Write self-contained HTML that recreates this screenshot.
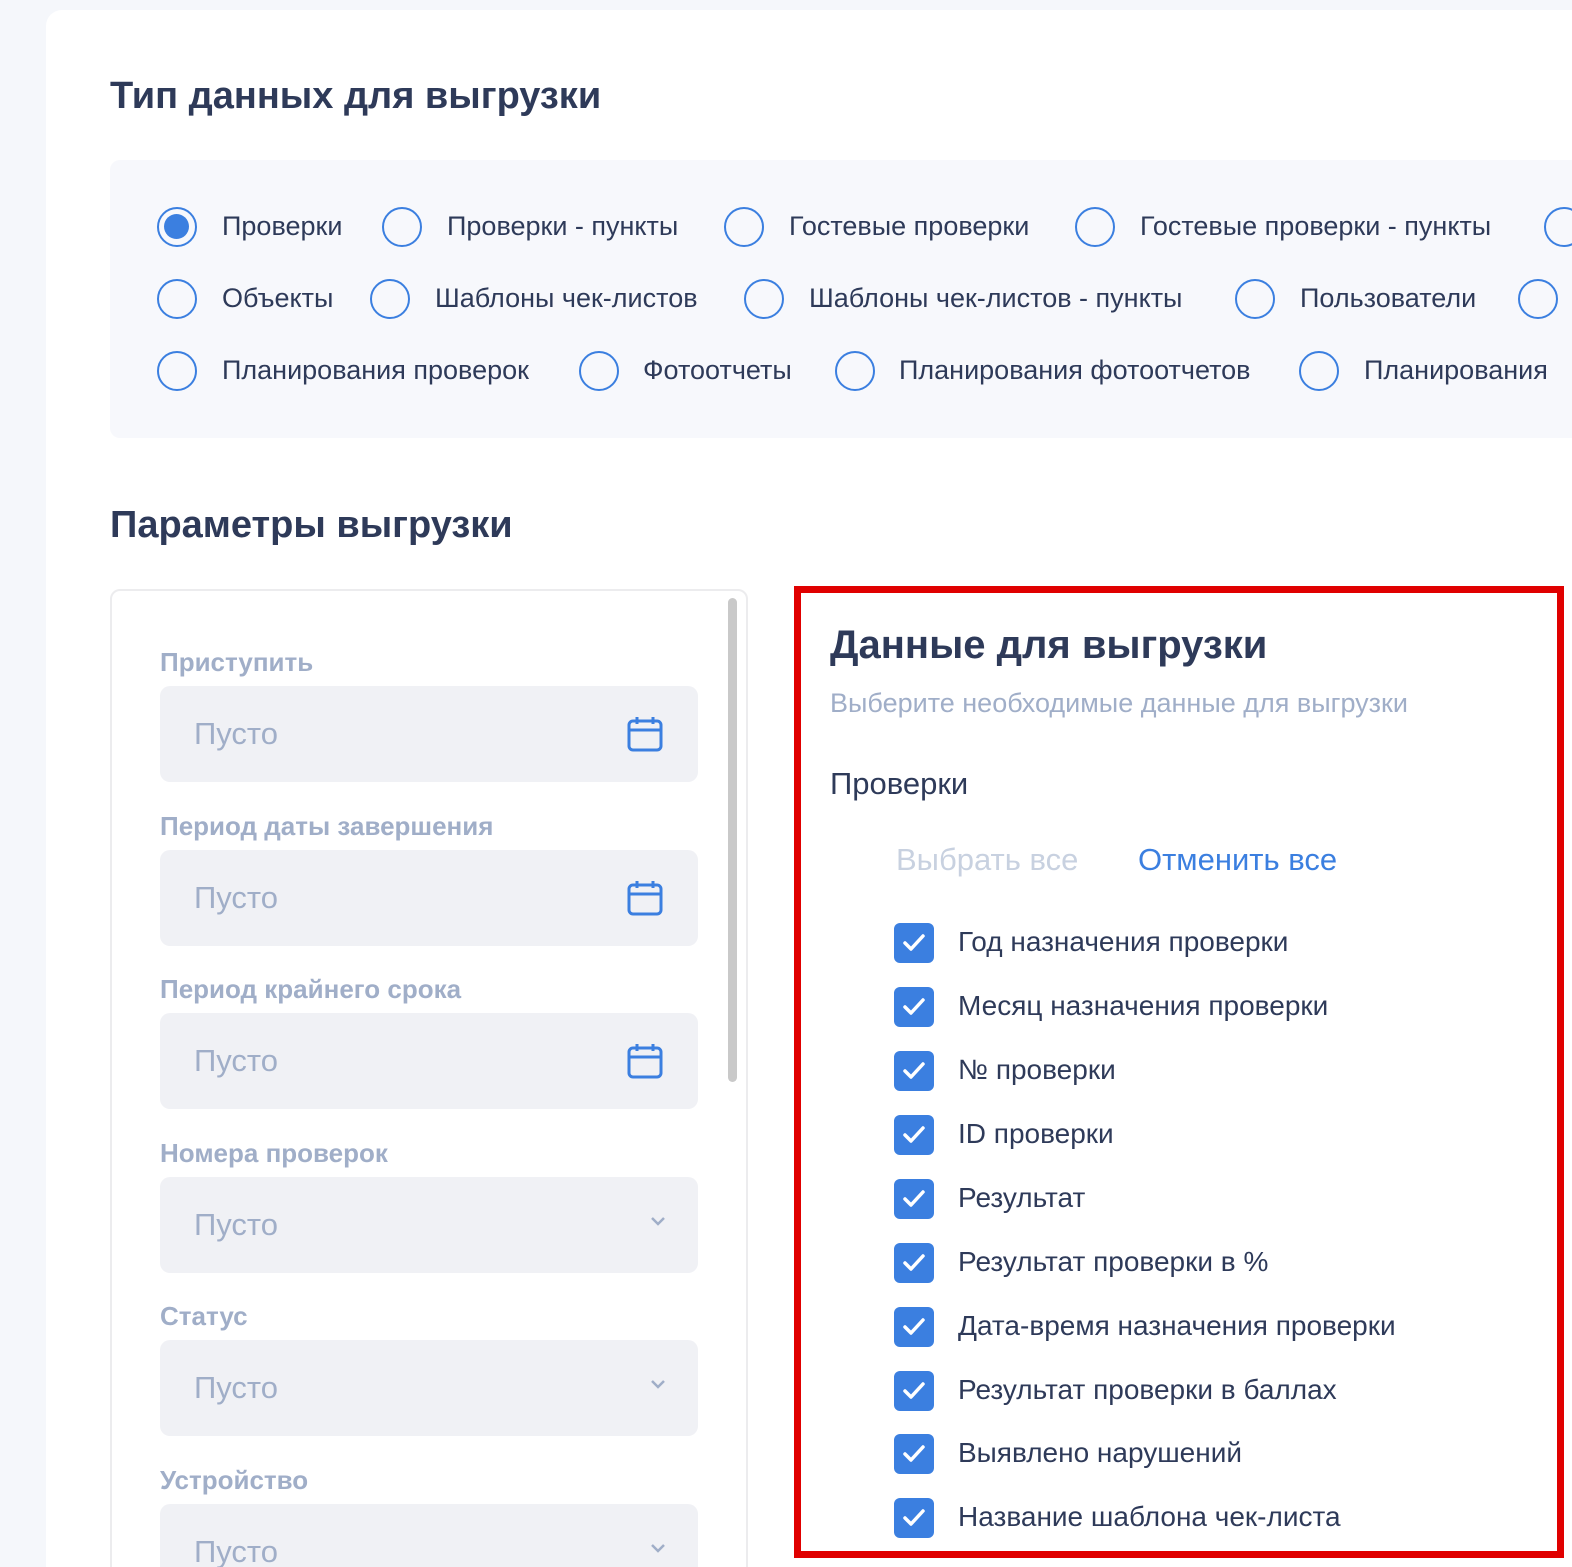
<!DOCTYPE html><html style="overflow:hidden;width:1572px;height:1567px"><head><meta charset="utf-8"><style>
*{box-sizing:border-box;margin:0;padding:0}
html,body{width:1572px;height:1567px;overflow:hidden}
body{background:#f5f7fb;font-family:"Liberation Sans",Arial,sans-serif;color:#2e3a59}
#w{position:relative;width:1572px;height:1567px;overflow:hidden}
.card{position:absolute;left:46px;top:10px;width:1526px;height:1557px;background:#fff;border-radius:16px 0 0 0}
.a{position:absolute;white-space:nowrap}
h1{position:absolute;font-size:38px;font-weight:bold;color:#2e3a59;letter-spacing:0}
.rbox{position:absolute;left:110px;top:160px;width:1462px;height:278px;background:#f7f8fc;border-radius:10px 0 0 10px}
.r{position:absolute;width:40px;height:40px;border:2.5px solid #3b7fe0;border-radius:50%}
.r.on::after{content:"";position:absolute;left:5px;top:5px;width:25px;height:25px;border-radius:50%;background:#3b7fe0}
.rl{position:absolute;font-size:27px;color:#2e3a59;white-space:nowrap}
.panel{position:absolute;left:110px;top:589px;width:638px;height:1000px;border:2px solid #ececee;border-radius:10px;background:#fff}
.lab{position:absolute;left:160px;font-size:26px;font-weight:bold;color:#a0aec8}
.inp{position:absolute;left:160px;width:538px;height:96px;background:#f0f1f5;border-radius:10px}
.inp span{position:absolute;left:34px;top:30px;font-size:31px;color:#a0aec8}
.ic{position:absolute;left:467px;top:30px}
.chev{position:absolute;left:490px;top:38px}
.red{position:absolute;left:794px;top:586px;width:770px;height:972px;border:7px solid #e00000;background:#fff}
.cb{position:absolute;left:894px;width:40px;height:40px;background:#3b7fe0;border-radius:6px}
.cb svg{position:absolute;left:8px;top:9px}
.cl{position:absolute;left:958px;font-size:28px;color:#2e3a59;white-space:nowrap}
</style></head><body><div id="w">
<div class="card"></div>
<h1 style="left:110px;top:75px">Тип данных для выгрузки</h1>
<div class="rbox"></div>
<div class="r on" style="left:157px;top:207px"></div><div class="rl" style="left:222px;top:211px">Проверки</div>
<div class="r" style="left:382px;top:207px"></div><div class="rl" style="left:447px;top:211px">Проверки - пункты</div>
<div class="r" style="left:724px;top:207px"></div><div class="rl" style="left:789px;top:211px">Гостевые проверки</div>
<div class="r" style="left:1075px;top:207px"></div><div class="rl" style="left:1140px;top:211px">Гостевые проверки - пункты</div>
<div class="r" style="left:1544px;top:207px"></div>
<div class="r" style="left:157px;top:279px"></div><div class="rl" style="left:222px;top:283px">Объекты</div>
<div class="r" style="left:370px;top:279px"></div><div class="rl" style="left:435px;top:283px">Шаблоны чек-листов</div>
<div class="r" style="left:744px;top:279px"></div><div class="rl" style="left:809px;top:283px">Шаблоны чек-листов - пункты</div>
<div class="r" style="left:1235px;top:279px"></div><div class="rl" style="left:1300px;top:283px">Пользователи</div>
<div class="r" style="left:1518px;top:279px"></div>
<div class="r" style="left:157px;top:351px"></div><div class="rl" style="left:222px;top:355px">Планирования проверок</div>
<div class="r" style="left:579px;top:351px"></div><div class="rl" style="left:643px;top:355px">Фотоотчеты</div>
<div class="r" style="left:835px;top:351px"></div><div class="rl" style="left:899px;top:355px">Планирования фотоотчетов</div>
<div class="r" style="left:1299px;top:351px"></div><div class="rl" style="left:1364px;top:355px">Планирования</div>
<h1 style="left:110px;top:504px">Параметры выгрузки</h1>
<div class="panel"></div>
<div class="a" style="left:728px;top:598px;width:9px;height:484px;background:#c9c9c9;border-radius:5px"></div>
<div class="lab" style="top:647px">Приступить</div>
<div class="inp" style="top:686px"><span>Пусто</span><svg class="ic" width="36" height="36" viewBox="0 0 36 36" fill="none" stroke="#3b7fe0" stroke-width="3"><rect x="2" y="5" width="32" height="29" rx="4"/><line x1="2" y1="14" x2="34" y2="14"/><line x1="10" y1="1" x2="10" y2="8"/><line x1="26" y1="1" x2="26" y2="8"/></svg></div>
<div class="lab" style="top:811px">Период даты завершения</div>
<div class="inp" style="top:850px"><span>Пусто</span><svg class="ic" width="36" height="36" viewBox="0 0 36 36" fill="none" stroke="#3b7fe0" stroke-width="3"><rect x="2" y="5" width="32" height="29" rx="4"/><line x1="2" y1="14" x2="34" y2="14"/><line x1="10" y1="1" x2="10" y2="8"/><line x1="26" y1="1" x2="26" y2="8"/></svg></div>
<div class="lab" style="top:974px">Период крайнего срока</div>
<div class="inp" style="top:1013px"><span>Пусто</span><svg class="ic" width="36" height="36" viewBox="0 0 36 36" fill="none" stroke="#3b7fe0" stroke-width="3"><rect x="2" y="5" width="32" height="29" rx="4"/><line x1="2" y1="14" x2="34" y2="14"/><line x1="10" y1="1" x2="10" y2="8"/><line x1="26" y1="1" x2="26" y2="8"/></svg></div>
<div class="lab" style="top:1138px">Номера проверок</div>
<div class="inp" style="top:1177px"><span>Пусто</span><svg class="chev" width="16" height="12" viewBox="0 0 16 12" fill="none" stroke="#a0aec8" stroke-width="2.5"><polyline points="2,3 8,9 14,3"/></svg></div>
<div class="lab" style="top:1301px">Статус</div>
<div class="inp" style="top:1340px"><span>Пусто</span><svg class="chev" width="16" height="12" viewBox="0 0 16 12" fill="none" stroke="#a0aec8" stroke-width="2.5"><polyline points="2,3 8,9 14,3"/></svg></div>
<div class="lab" style="top:1465px">Устройство</div>
<div class="inp" style="top:1504px"><span>Пусто</span><svg class="chev" width="16" height="12" viewBox="0 0 16 12" fill="none" stroke="#a0aec8" stroke-width="2.5"><polyline points="2,3 8,9 14,3"/></svg></div>
<div class="red"></div>
<div class="a" style="left:830px;top:623px;font-size:40px;font-weight:bold;color:#2e3a59">Данные для выгрузки</div>
<div class="a" style="left:830px;top:688px;font-size:27px;color:#a0aec8">Выберите необходимые данные для выгрузки</div>
<div class="a" style="left:830px;top:766px;font-size:31px;color:#2e3a59">Проверки</div>
<div class="a" style="left:896px;top:842px;font-size:31px;color:#c8d1e0">Выбрать все</div>
<div class="a" style="left:1138px;top:842px;font-size:31px;color:#3b7fe0">Отменить все</div>
<div class="cb" style="top:923px"><svg width="24" height="22" viewBox="0 0 24 22" fill="none" stroke="#fff" stroke-width="3.5" stroke-linecap="round" stroke-linejoin="round"><polyline points="3,11 9,17 21,4"/></svg></div><div class="cl" style="top:926px">Год назначения проверки</div>
<div class="cb" style="top:987px"><svg width="24" height="22" viewBox="0 0 24 22" fill="none" stroke="#fff" stroke-width="3.5" stroke-linecap="round" stroke-linejoin="round"><polyline points="3,11 9,17 21,4"/></svg></div><div class="cl" style="top:990px">Месяц назначения проверки</div>
<div class="cb" style="top:1051px"><svg width="24" height="22" viewBox="0 0 24 22" fill="none" stroke="#fff" stroke-width="3.5" stroke-linecap="round" stroke-linejoin="round"><polyline points="3,11 9,17 21,4"/></svg></div><div class="cl" style="top:1054px">№ проверки</div>
<div class="cb" style="top:1115px"><svg width="24" height="22" viewBox="0 0 24 22" fill="none" stroke="#fff" stroke-width="3.5" stroke-linecap="round" stroke-linejoin="round"><polyline points="3,11 9,17 21,4"/></svg></div><div class="cl" style="top:1118px">ID проверки</div>
<div class="cb" style="top:1179px"><svg width="24" height="22" viewBox="0 0 24 22" fill="none" stroke="#fff" stroke-width="3.5" stroke-linecap="round" stroke-linejoin="round"><polyline points="3,11 9,17 21,4"/></svg></div><div class="cl" style="top:1182px">Результат</div>
<div class="cb" style="top:1243px"><svg width="24" height="22" viewBox="0 0 24 22" fill="none" stroke="#fff" stroke-width="3.5" stroke-linecap="round" stroke-linejoin="round"><polyline points="3,11 9,17 21,4"/></svg></div><div class="cl" style="top:1246px">Результат проверки в %</div>
<div class="cb" style="top:1307px"><svg width="24" height="22" viewBox="0 0 24 22" fill="none" stroke="#fff" stroke-width="3.5" stroke-linecap="round" stroke-linejoin="round"><polyline points="3,11 9,17 21,4"/></svg></div><div class="cl" style="top:1310px">Дата-время назначения проверки</div>
<div class="cb" style="top:1371px"><svg width="24" height="22" viewBox="0 0 24 22" fill="none" stroke="#fff" stroke-width="3.5" stroke-linecap="round" stroke-linejoin="round"><polyline points="3,11 9,17 21,4"/></svg></div><div class="cl" style="top:1374px">Результат проверки в баллах</div>
<div class="cb" style="top:1434px"><svg width="24" height="22" viewBox="0 0 24 22" fill="none" stroke="#fff" stroke-width="3.5" stroke-linecap="round" stroke-linejoin="round"><polyline points="3,11 9,17 21,4"/></svg></div><div class="cl" style="top:1437px">Выявлено нарушений</div>
<div class="cb" style="top:1498px"><svg width="24" height="22" viewBox="0 0 24 22" fill="none" stroke="#fff" stroke-width="3.5" stroke-linecap="round" stroke-linejoin="round"><polyline points="3,11 9,17 21,4"/></svg></div><div class="cl" style="top:1501px">Название шаблона чек-листа</div>
</div></body></html>
